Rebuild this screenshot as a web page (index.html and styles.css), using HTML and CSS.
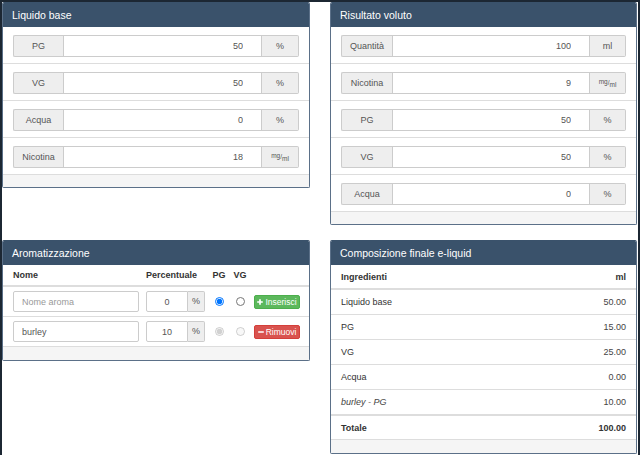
FILE: index.html
```html
<!DOCTYPE html>
<html lang="it">
<head>
<meta charset="utf-8">
<title>Calcolatore e-liquid</title>
<link rel="stylesheet" href="styles.css">
</head>
<body>
<div class="page">
  <div class="grid">
    <section class="panel">
      <div class="panel-heading">Liquido base</div>
      <div class="field-row">
        <div class="input-group"><span class="addon lbl">PG</span><input class="num" value="50"><span class="addon unit">%</span></div>
      </div>
      <div class="field-row">
        <div class="input-group"><span class="addon lbl">VG</span><input class="num" value="50"><span class="addon unit">%</span></div>
      </div>
      <div class="field-row">
        <div class="input-group"><span class="addon lbl">Acqua</span><input class="num" value="0"><span class="addon unit">%</span></div>
      </div>
      <div class="field-row">
        <div class="input-group"><span class="addon lbl">Nicotina</span><input class="num" value="18"><span class="addon unit frac"><sup>mg</sup>/<sub>ml</sub></span></div>
      </div>
      <div class="panel-footer"></div>
    </section>

    <section class="panel right">
      <div class="panel-heading">Risultato voluto</div>
      <div class="field-row">
        <div class="input-group"><span class="addon lbl">Quantità</span><input class="num" value="100"><span class="addon unit">ml</span></div>
      </div>
      <div class="field-row">
        <div class="input-group"><span class="addon lbl">Nicotina</span><input class="num" value="9"><span class="addon unit frac"><sup>mg</sup>/<sub>ml</sub></span></div>
      </div>
      <div class="field-row">
        <div class="input-group"><span class="addon lbl">PG</span><input class="num" value="50"><span class="addon unit">%</span></div>
      </div>
      <div class="field-row">
        <div class="input-group"><span class="addon lbl">VG</span><input class="num" value="50"><span class="addon unit">%</span></div>
      </div>
      <div class="field-row">
        <div class="input-group"><span class="addon lbl">Acqua</span><input class="num" value="0"><span class="addon unit">%</span></div>
      </div>
      <div class="panel-footer"></div>
    </section>

    <section class="panel">
      <div class="panel-heading">Aromatizzazione</div>
      <div class="aroma-head">
        <span>Nome</span>
        <span>Percentuale</span>
        <span class="center">PG</span>
        <span class="center">VG</span>
        <span></span>
      </div>
      <div class="aroma-row">
        <input class="text-input" placeholder="Nome aroma">
        <div class="pct-group"><input class="pct" value="0"><span class="addon pct-unit">%</span></div>
        <input type="radio" name="b1" class="radio" checked>
        <input type="radio" name="b1" class="radio">
        <button class="btn btn-green"><svg width="6" height="6" viewBox="0 0 6 6"><path d="M3 0.2v5.6M0.2 3h5.6" stroke="#fff" stroke-width="1.7"/></svg>Inserisci</button>
      </div>
      <div class="aroma-row">
        <input class="text-input" value="burley">
        <div class="pct-group"><input class="pct" value="10"><span class="addon pct-unit">%</span></div>
        <input type="radio" name="b2" class="radio" checked disabled>
        <input type="radio" name="b2" class="radio" disabled>
        <button class="btn btn-red"><svg width="6" height="6" viewBox="0 0 6 6"><path d="M0.2 3h5.6" stroke="#fff" stroke-width="1.7"/></svg>Rimuovi</button>
      </div>
      <div class="panel-footer"></div>
    </section>

    <section class="panel right">
      <div class="panel-heading">Composizione finale e-liquid</div>
      <div class="comp-row comp-head"><span>Ingredienti</span><span>ml</span></div>
      <div class="comp-row"><span>Liquido base</span><span class="val">50.00</span></div>
      <div class="comp-row"><span>PG</span><span class="val">15.00</span></div>
      <div class="comp-row"><span>VG</span><span class="val">25.00</span></div>
      <div class="comp-row"><span>Acqua</span><span class="val">0.00</span></div>
      <div class="comp-row comp-last"><em>burley - PG</em><span class="val">10.00</span></div>
      <div class="comp-row comp-total"><span>Totale</span><span>100.00</span></div>
      <div class="panel-footer"></div>
    </section>
  </div>
</div>
</body>
</html>
```

FILE: styles.css
```css
* { box-sizing: border-box; }

html, body { height: 100%; }

body {
  margin: 0;
  padding: 2px 2px 0 2px;
  background: #1c2733;
  font-family: "Liberation Sans", Arial, sans-serif;
  font-size: 9px;
  color: #333;
}

.page {
  background: #fff;
  height: 453px;
}

.grid {
  display: grid;
  grid-template-columns: 308px 307px;
  column-gap: 20px;
  row-gap: 15px;
  align-items: start;
}

.panel {
  background: #fff;
  border: 1px solid #5b7088;
  border-top-color: #3a526b;
  border-radius: 2px;
  overflow: hidden;
}

.panel-heading {
  height: 24px;
  background: #3a526b;
  color: #fff;
  font-size: 10.5px;
  display: flex;
  align-items: center;
  padding: 0 9px;
}

.panel-footer {
  height: 13px;
  background: #f5f5f5;
  border-top: 1px solid #ddd;
}

/* input rows */
.field-row {
  padding: 8px 10px 6px;
  border-top: 1px solid #ddd;
}
.panel-heading + .field-row { border-top: 0; }

.input-group {
  display: flex;
  height: 22px;
}

.addon {
  background: #eee;
  border: 1px solid #ccc;
  color: #555;
  display: flex;
  align-items: center;
  justify-content: center;
  line-height: 1;
}

.lbl {
  width: 50px;
  border-right: 0;
  border-radius: 2px 0 0 2px;
}
.right .lbl { width: 51px; }

.unit {
  width: 37px;
  border-left: 0;
  border-radius: 0 2px 2px 0;
}
.right .unit { width: 36px; }

.num {
  flex: 1;
  min-width: 0;
  height: 22px;
  margin: 0;
  border: 1px solid #ccc;
  border-radius: 0;
  padding: 0 18px 0 6px;
  text-align: right;
  font: inherit;
  color: #555;
  background: #fff;
}

.frac { font-size: 6.5px; }
.frac sup { position: relative; top: -1px; vertical-align: top; font-size: 6.5px; }
.frac sub { position: relative; top: 2px; vertical-align: baseline; font-size: 6.5px; }

/* aromi */
.aroma-head,
.aroma-row {
  display: grid;
  grid-template-columns: 126px 59px 14px 14px 46px;
  column-gap: 7px;
  align-items: center;
  padding: 0 10px;
}

.aroma-head {
  height: 22px;
  border-bottom: 2px solid #ddd;
  font-weight: bold;
  color: #333;
}

.aroma-row {
  height: 30px;
  border-bottom: 1px solid #ddd;
}
.aroma-row + .panel-footer { border-top: 0; height: 13px; }

.center { text-align: center; }

.text-input {
  height: 21px;
  margin: 0;
  border: 1px solid #ccc;
  border-radius: 2px;
  padding: 0 8px;
  font: inherit;
  color: #555;
  width: 100%;
}
.text-input::placeholder { color: #999; }

.pct-group {
  display: flex;
  height: 21px;
}

.pct {
  width: 42px;
  height: 21px;
  margin: 0;
  border: 1px solid #ccc;
  border-radius: 2px 0 0 2px;
  padding: 0 2px;
  text-align: center;
  font: inherit;
  color: #555;
}

.pct-unit {
  width: 17px;
  border-left: 0;
  border-radius: 0 2px 2px 0;
}

.radio {
  width: 9px;
  height: 9px;
  margin: 0;
  justify-self: center;
}

.btn {
  height: 14px;
  margin: 0;
  padding: 0 2px;
  border: 1px solid;
  border-radius: 2px;
  color: #fff;
  font-family: inherit;
  font-size: 8.5px;
  display: flex;
  align-items: center;
  justify-content: center;
  gap: 2px;
}

.btn-green { background: #5cb85c; border-color: #4cae4c; }
.btn-red { background: #d9534f; border-color: #d43f3a; }

/* composizione */
.comp-row {
  height: 25px;
  display: flex;
  align-items: center;
  justify-content: space-between;
  padding: 0 10px;
  border-bottom: 1px solid #ddd;
  color: #333;
}

.comp-row .val { color: #444; }

.comp-head {
  border-bottom: 2px solid #ddd;
  font-weight: bold;
}

.comp-last {
  height: 26px;
  border-bottom: 2px solid #ddd;
}
.comp-last em { color: #444; }

.comp-total {
  height: 24px;
  font-weight: bold;
}

.comp-row + .panel-footer { border-top: 0; height: 13px; }
```
